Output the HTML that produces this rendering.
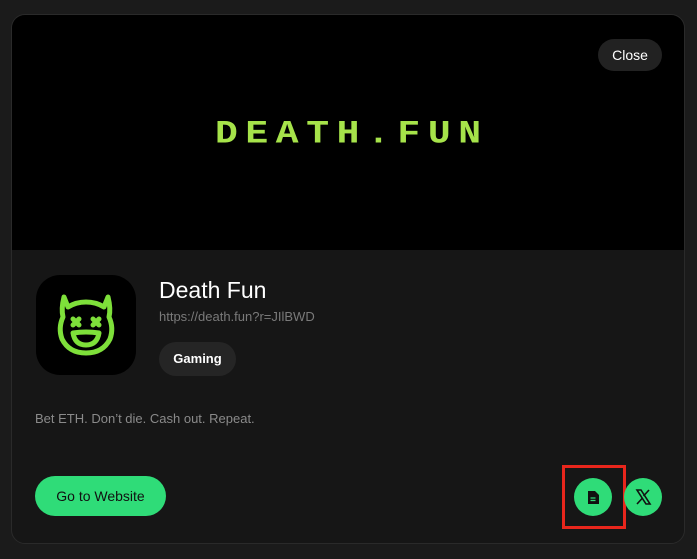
<!DOCTYPE html>
<html><head><style>
body{margin:0;width:697px;height:559px;background:#1b1b1b;font-family:"Liberation Sans",sans-serif;position:relative;overflow:hidden}
.card{position:absolute;left:11px;top:14px;width:674px;height:530px;background:#161616;border-radius:14px;overflow:hidden;border:1px solid #2a2a2a;box-sizing:border-box}
.banner{position:absolute;left:0;top:0;width:100%;height:235px;background:#000}
.close{position:absolute;left:586px;top:24px;width:64px;height:32px;border-radius:16px;background:#222;color:#fff;font-size:14px;line-height:32px;text-align:center}
.logo{position:absolute;left:203px;top:98px;font-family:"Liberation Mono",monospace;font-weight:bold;font-size:38px;letter-spacing:7.6px;color:#a6e34a;transform:scaleY(0.85)}
.abs{position:absolute}
</style></head><body>
<div class="card">
<div class="banner"></div>
<div class="close">Close</div>
<div class="logo">DEATH.FUN</div>
<div class="abs" style="left:24px;top:260px;width:100px;height:100px;border-radius:24px;background:#000">
<svg width="100" height="100" viewBox="0 0 100 100" fill="none" stroke="#7ee03a" stroke-width="5" stroke-linecap="round" stroke-linejoin="round">
<path d="M32 32 L28 22 Q25 34 27 42 Q22 53 26 64 Q33 78 50 78 Q67 78 74 64 Q78 53 73 42 Q75 34 72 22 L68 32 Q60 27 50 27 Q40 27 32 32Z"/>
<path d="M37 44l6 6M43 44l-6 6M57 44l6 6M63 44l-6 6"/>
<path d="M37 58 Q50 56 63 58 Q61 70 50 70 Q39 70 37 58Z"/>
</svg></div>
<div class="abs" style="left:147px;top:262px;color:#fff;font-size:23px">Death Fun</div>
<div class="abs" style="left:147px;top:294px;color:#7a7a7a;font-size:13px">https://death.fun?r=JIlBWD</div>
<div class="abs" style="left:147px;top:327px;width:77px;height:34px;border-radius:17px;background:#252525;color:#fff;font-size:13px;font-weight:bold;line-height:34px;text-align:center">Gaming</div>
<div class="abs" style="left:23px;top:396px;color:#8a8a8a;font-size:13px">Bet ETH. Don’t die. Cash out. Repeat.</div>
<div class="abs" style="left:23px;top:461px;width:131px;height:40px;border-radius:20px;background:#2fdc78;color:#111;font-size:14px;line-height:40px;text-align:center">Go to Website</div>
<div class="abs" style="left:550px;top:450px;width:58px;height:58px;border:3px solid #e8261c"></div>
<div class="abs" style="left:562px;top:463px;width:38px;height:38px;border-radius:50%;background:#2fdc78">
<svg width="38" height="38" viewBox="0 0 38 38"><path d="M14 13h7l4 4v9h-11z" fill="#111"/><path d="M16.5 20h5M16.5 22.5h5" stroke="#2fdc78" stroke-width="1.2"/></svg></div>
<div class="abs" style="left:612px;top:463px;width:38px;height:38px;border-radius:50%;background:#2fdc78">
<svg width="38" height="38" viewBox="0 0 38 38"><path d="M13 12h4l9 14h-4z" fill="none" stroke="#111" stroke-width="1.6"/><path d="M25 12l-5.5 6M13 26l5.5-6" stroke="#111" stroke-width="1.6"/></svg></div>
</div>
</body></html>
